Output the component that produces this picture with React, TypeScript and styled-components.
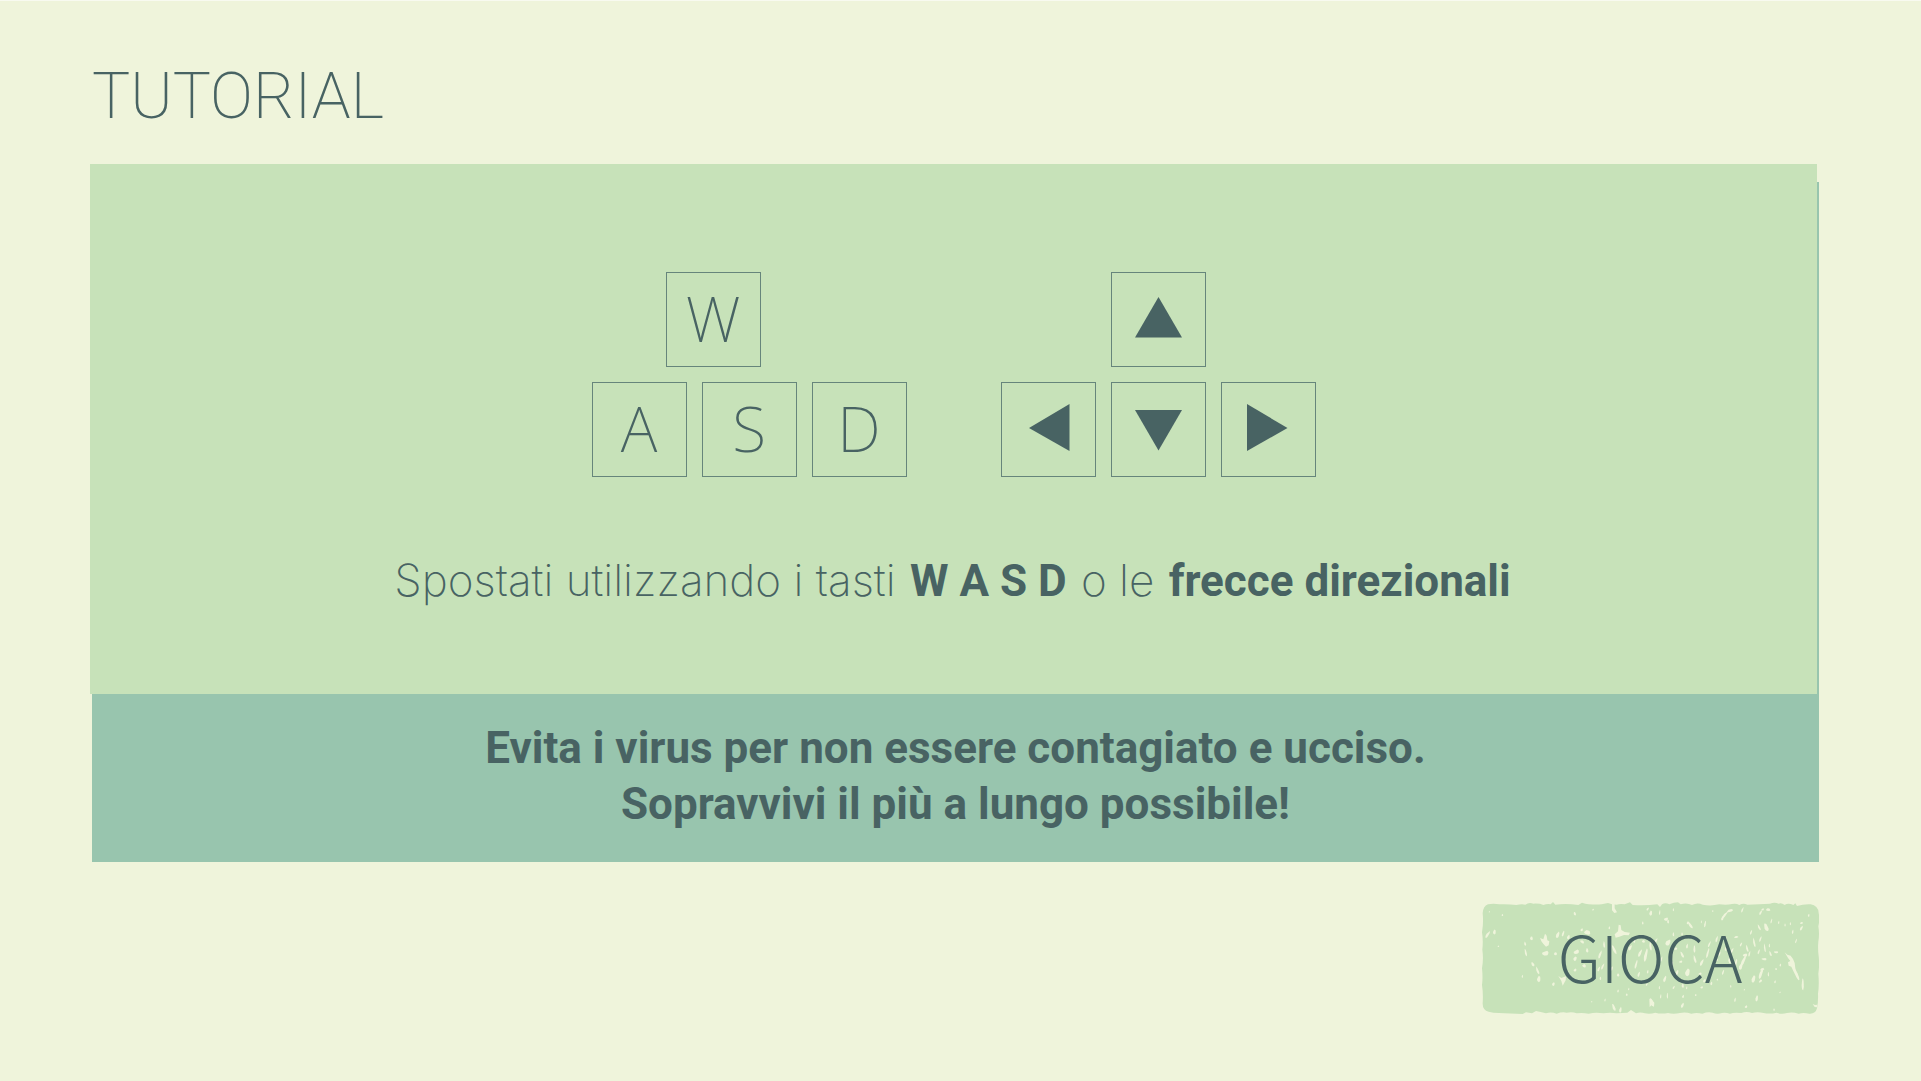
import React from "react";
import styled, { createGlobalStyle } from "styled-components";

const color = {
  page: "#eff4db",
  panel: "#c7e2b9",
  teal: "#98c5ae",
  ink: "#486363",
  keyLine: "#66857b",
};

const thin = `"Noto Sans", "Open Sans", sans-serif`;
const body = `Inter, "Noto Sans", sans-serif`;
const strong = `Roboto, "Noto Sans", sans-serif`;
const display = `"Noto Sans CJK JP", "Noto Sans", sans-serif`;

const GlobalStyle = createGlobalStyle`
  *, *::before, *::after { box-sizing: border-box; }
  body { margin: 0; background: ${color.page}; color: ${color.ink}; }
`;

const Page = styled.main`
  display: flex;
  flex-direction: column;
  min-height: 100vh;
  padding: 48px 102px 64px 90px;
  border-top: 1px solid #f8faf0;
`;

const Title = styled.h1`
  margin: 0 0 19px;
  padding-left: 2px;
  font: 200 64px/96px ${strong};
`;

const Board = styled.section`
  display: flex;
  flex-direction: column;
`;

const Controls = styled.div`
  display: flex;
  flex-direction: column;
  align-items: center;
  gap: 75px;
  margin-right: 2px;
  padding: 108px 40px 85px;
  background: ${color.panel};
  box-shadow: 2px 18px 0 ${color.teal};
`;

const KeyGroups = styled.div`
  display: flex;
  flex-wrap: wrap;
  justify-content: center;
  gap: 94px;
`;

const KeyGroup = styled.div`
  display: flex;
  flex-direction: column;
  gap: 15px;
`;

const KeyRow = styled.div<{ $indent?: number }>`
  display: flex;
  gap: 15px;
  padding-left: ${(p) => p.$indent ?? 0}px;
`;

const Key = styled.kbd`
  display: flex;
  align-items: center;
  justify-content: center;
  width: 95px;
  height: 95px;
  padding-bottom: 4px;
  border: 1px solid ${color.keyLine};
  font: 200 62px/88px ${thin};
`;

const ArrowBox = styled(Key)`
  padding: 0;
`;

const Arrow = styled.svg`
  display: block;
  width: 93px;
  height: 93px;
  fill: ${color.ink};
`;

const Hint = styled.p`
  margin: 0;
  font: 200 44px/56px ${body};
  text-align: center;
`;

const Strong = styled.strong`
  margin: 0 2px;
  font-family: ${strong};
  font-weight: 700;
`;

const Banner = styled.p`
  position: relative;
  margin: 0 0 0 2px;
  padding: 26px 40px 30px;
  background: ${color.teal};
  font: 700 44px/56px ${strong};
  text-align: center;
`;

const Line = styled.span`
  display: block;
`;

const Actions = styled.div`
  display: flex;
  justify-content: flex-end;
  margin-top: 40px;
`;

const PlayButton = styled.button`
  position: relative;
  width: 338px;
  height: 113px;
  padding: 0 0 8px;
  border: 0;
  background: none;
  color: ${color.ink};
  font: 300 64px/96px ${display};
  cursor: pointer;
`;

const Stamp = styled.svg`
  position: absolute;
  inset: 0;
  width: 100%;
  height: 100%;
`;

const Label = styled.span`
  position: relative;
`;

const arrows = {
  su: "47.5,25 71,65.5 24,65.5",
  sinistra: "28,46 68.5,22 68.5,69",
  giù: "24,28 71,28 47.5,68.5",
  destra: "26,22 66.5,46 26,69",
};

function ArrowKey({ dir }: { dir: keyof typeof arrows }) {
  return (
    <ArrowBox>
      <Arrow viewBox="1 1 93 93" role="img" aria-label={dir}>
        <polygon points={arrows[dir]} />
      </Arrow>
    </ArrowBox>
  );
}

// Worn spots of the stamp: x, y, width, height, rotation.
const specks: [number, number, number, number, number][] = [
  [83, 166, 8, 22, 28], [103, 159, 9, 13, 10], [88, 98, 4, 4, 0], [127, 108, 5, 6, 0], [115, 202, 5, 4, 0],
  [214, 178, 9, 10, 0], [195, 194, 6, 12, -20], [197, 221, 6, 20, -12], [187, 292, 4, 8, 0], [218, 256, 8, 12, -30],
  [232, 274, 7, 22, -25], [236, 300, 11, 17, 10], [256, 222, 20, 14, 10], [286, 224, 10, 8, 0], [293, 167, 10, 18, 10],
  [309, 164, 6, 16, 20], [325, 174, 9, 12, 0], [344, 104, 7, 10, -15], [365, 152, 8, 8, 0], [381, 160, 20, 12, 10],
  [349, 218, 17, 12, 0], [345, 239, 10, 12, 30], [381, 214, 8, 12, -20], [372, 260, 12, 9, 20], [345, 273, 9, 8, 0],
  [280, 315, 8, 10, 25], [399, 92, 6, 5, 0], [366, 188, 14, 7, 30], [420, 226, 7, 24, 15], [416, 270, 6, 14, 25],
  [428, 262, 6, 18, 20], [421, 298, 5, 9, 0], [432, 196, 6, 18, -10], [462, 212, 8, 26, -25], [455, 268, 7, 12, 10],
  [474, 288, 8, 8, 0], [448, 146, 5, 8, 0], [461, 385, 8, 20, -20], [481, 392, 8, 16, 0], [395, 368, 4, 4, 0],
  [435, 363, 4, 8, 0], [500, 347, 6, 6, 0], [506, 330, 4, 7, 0], [474, 336, 5, 8, 10], [510, 206, 9, 16, 20],
  [528, 256, 6, 24, 15], [540, 222, 8, 22, 20], [557, 228, 9, 36, 12], [571, 200, 7, 26, -10], [536, 286, 6, 14, 20],
  [563, 278, 5, 10, 0], [548, 132, 5, 8, 0], [563, 90, 6, 9, 20], [572, 102, 9, 14, 10], [523, 184, 6, 14, 0],
  [550, 187, 10, 7, 10], [588, 184, 6, 15, 20], [575, 370, 10, 24, -20], [602, 352, 4, 12, 0], [622, 350, 4, 16, 0],
  [618, 120, 12, 10, 20], [624, 128, 6, 10, 0], [604, 240, 5, 15, 10], [614, 300, 8, 18, 20], [624, 190, 14, 18, 20],
  [640, 166, 5, 11, 0], [646, 208, 12, 7, 20], [636, 258, 6, 20, 10], [651, 280, 8, 15, 10], [666, 227, 7, 18, -25],
  [681, 201, 6, 14, 0], [682, 280, 14, 20, 15], [704, 240, 7, 22, -20], [703, 210, 6, 20, 0], [662, 248, 10, 6, 0],
  [690, 138, 8, 22, -35], [683, 131, 6, 8, 0], [735, 135, 5, 18, 10], [724, 128, 3, 8, 0], [666, 165, 5, 8, 0],
  [641, 325, 5, 10, 20], [668, 320, 7, 12, 0], [680, 326, 4, 8, 0], [667, 379, 8, 14, 25], [669, 352, 6, 9, 0],
  [707, 348, 5, 6, 0], [725, 325, 8, 6, 0], [733, 305, 7, 10, 30], [754, 313, 6, 10, 0], [772, 302, 5, 5, 0],
  [725, 250, 8, 20, 20], [743, 222, 6, 28, 15], [748, 195, 5, 18, 20], [768, 242, 12, 7, 0], [770, 180, 6, 18, 10],
  [753, 268, 6, 10, 0], [720, 284, 10, 6, 0], [787, 118, 7, 12, 20], [795, 107, 7, 26, 35], [809, 95, 20, 7, -20],
  [847, 92, 5, 16, 15], [798, 184, 6, 18, 0], [798, 208, 7, 14, 10], [778, 224, 6, 14, 20], [808, 244, 7, 18, -15],
  [827, 252, 7, 22, 15], [816, 214, 6, 16, 20], [828, 174, 14, 5, -10], [843, 196, 5, 12, 20], [850, 245, 9, 28, 25],
  [855, 228, 14, 9, 10], [842, 262, 10, 18, 20], [861, 208, 6, 20, -20], [873, 160, 5, 13, 20], [868, 224, 5, 16, 10],
  [880, 300, 11, 20, 15], [903, 282, 9, 32, 15], [906, 271, 14, 6, -20], [901, 306, 12, 7, -30], [925, 286, 4, 12, 0],
  [897, 145, 6, 18, -30], [918, 145, 12, 22, -20], [902, 100, 6, 15, 20], [924, 92, 14, 7, 0], [908, 91, 8, 6, 0],
  [934, 126, 4, 14, 15], [882, 190, 6, 26, -15], [901, 180, 5, 16, 20], [914, 206, 5, 24, -10], [896, 218, 5, 14, 20],
  [912, 240, 16, 6, 10], [931, 224, 6, 14, -20], [948, 219, 14, 6, 15], [928, 200, 4, 10, 0], [956, 130, 4, 9, 0],
  [975, 138, 4, 8, 0], [998, 158, 5, 12, 0], [991, 134, 4, 8, 0], [1024, 147, 7, 14, 20], [1024, 132, 10, 5, -10],
  [1046, 109, 5, 8, 0], [1008, 186, 4, 12, 20], [961, 258, 5, 8, 0], [948, 270, 6, 5, 0], [945, 308, 5, 8, 0],
  [1028, 316, 7, 32, 0], [1012, 290, 7, 26, -20], [890, 358, 8, 17, 10], [858, 383, 8, 7, 0], [942, 392, 5, 6, 0],
  [825, 362, 5, 12, 0], [812, 322, 4, 7, 0], [853, 332, 4, 5, 0], [598, 326, 4, 9, 0], [560, 316, 5, 8, 10],
  [640, 92, 4, 8, 0], [599, 100, 4, 14, 0], [758, 96, 5, 4, 0], [960, 340, 4, 5, 0], [789, 280, 5, 14, 20],
];

const tears = [
  "M240 177 L250 181 L255 164 L260 170 L262 184 L268 187 L266 199 L258 203 L251 196 L245 188Z",
  "M295 291 L304 297 L318 292 L317 304 L308 320 L304 306Z",
  "M456 72 L464 76 L464 88 L471 100 L463 102 L456 94Z",
  "M476 137 L482 139 L484 153 L494 159 L510 161 L506 169 L492 168 L478 173 L467 176 L464 166 L474 157Z",
  "M974 220 L982 227 L992 230 L999 240 L1004 252 L1006 268 L1013 288 L1018 302 L1010 296 L1001 278 L994 263 L986 260 L984 250 L991 246 L984 237Z",
  "M1058 375 L1065 378 L1072 377 L1071 385 L1064 384Z",
  "M568 360 L576 363 L583 371 L582 383 L575 378 L569 384Z",
];

const outline =
  "M68 103 Q69 82 84 76 Q100 73 118 76 Q146 75 169 78 Q185 74 196 77 Q207 69 220 74 Q240 73 250 78 Q263 73 272 76 L279 69 L286 77 Q320 73 355 78 L366 71 Q376 74 386 76 Q410 77 425 76 L444 72 L456 76 L470 77 Q481 73 494 76 L510 70 L518 78 Q560 80 592 76 L600 84 L606 76 Q616 70 628 76 Q642 70 654 70 L662 76 Q680 70 696 78 Q712 69 728 77 Q752 82 778 76 Q800 79 816 75 Q828 72 838 78 Q850 71 862 77 Q898 76 930 74 Q944 68 956 74 Q965 71 974 78 Q984 70 1000 78 L1006 73 L1011 81 Q1030 75 1052 76 Q1074 79 1076 102 Q1080 121 1075 142 Q1079 164 1075 188 Q1073 210 1076 231 Q1079 258 1075 284 Q1078 319 1074 344 Q1075 369 1071 388 Q1067 405 1048 404 Q1030 400 1016 404 Q997 398 981 402 Q964 407 950 401 Q929 406 911 402 Q892 397 876 402 Q860 396 844 402 Q822 399 810 404 Q797 400 786 402 Q771 407 758 401 Q744 397 727 404 Q710 400 694 404 Q675 398 660 402 Q640 406 624 402 Q603 406 586 401 Q570 406 555 403 Q540 398 528 403 L513 393 L502 401 Q487 401 470 403 Q450 400 430 403 Q407 399 386 404 Q366 400 350 403 Q337 397 320 401 Q306 398 290 404 Q273 398 258 403 L242 399 L228 396 L216 403 L198 400 L188 405 Q150 404 117 402 Q99 402 86 398 Q67 393 68 372 Q70 344 66 318 Q69 296 66 268 Q71 240 67 212 Q70 184 66 160 Q71 132 68 103Z";

function StampShape() {
  return (
    <Stamp viewBox="63 69 1014 339" preserveAspectRatio="none" aria-hidden="true">
      <path d={outline} fill={color.panel} />
      <g fill={color.page}>
        {tears.map((d) => (
          <path key={d} d={d} />
        ))}
        {specks.map(([x, y, w, h, r], i) => (
          <path
            key={i}
            transform={`translate(${x} ${y}) rotate(${r}) scale(${w / 9} ${h / 9})`}
            d={
              i % 2
                ? "M-1 -5 Q4 -5 4 -1 Q6 3 2 5 Q-3 5 -4 1 Q-3 -2 -1 -5Z"
                : "M2 -5 Q5 -3 4 1 Q4 5 -1 5 Q-5 4 -4 0 Q-2 -2 2 -5Z"
            }
          />
        ))}
      </g>
    </Stamp>
  );
}

export default function App() {
  return (
    <Page>
      <GlobalStyle />
      <Title>TUTORIAL</Title>
      <Board>
        <Controls>
          <KeyGroups>
            <KeyGroup>
              <KeyRow $indent={74}>
                <Key>W</Key>
              </KeyRow>
              <KeyRow>
                <Key>A</Key>
                <Key>S</Key>
                <Key>D</Key>
              </KeyRow>
            </KeyGroup>
            <KeyGroup>
              <KeyRow $indent={110}>
                <ArrowKey dir="su" />
              </KeyRow>
              <KeyRow>
                <ArrowKey dir="sinistra" />
                <ArrowKey dir="giù" />
                <ArrowKey dir="destra" />
              </KeyRow>
            </KeyGroup>
          </KeyGroups>
          <Hint>
            Spostati utilizzando i tasti <Strong>W A S D</Strong> o le <Strong>frecce direzionali</Strong>
          </Hint>
        </Controls>
        <Banner>
          <Line>Evita i virus per non essere contagiato e ucciso.</Line>
          <Line>Sopravvivi il più a lungo possibile!</Line>
        </Banner>
      </Board>
      <Actions>
        <PlayButton type="button">
          <StampShape />
          <Label>GIOCA</Label>
        </PlayButton>
      </Actions>
    </Page>
  );
}
